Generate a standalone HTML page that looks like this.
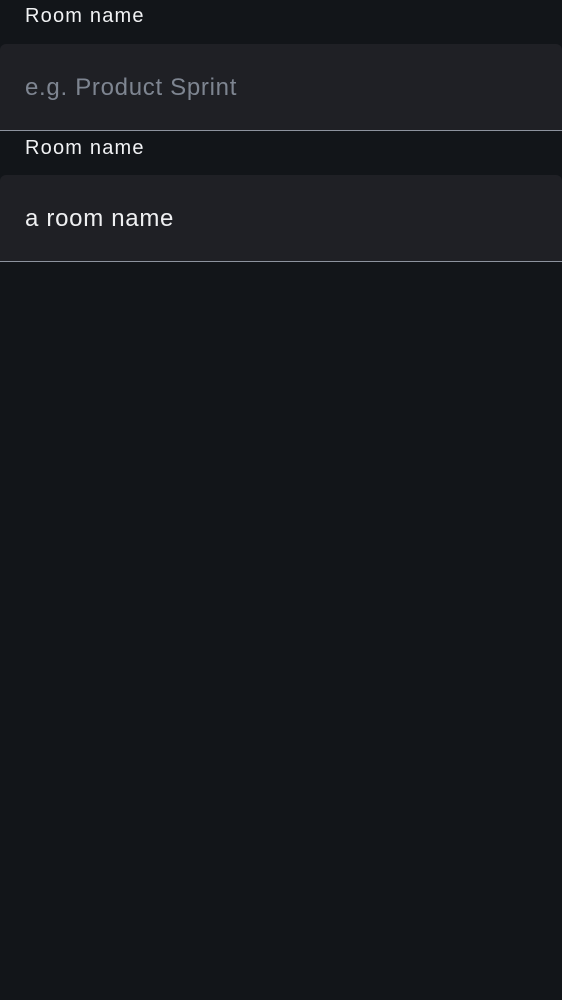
<!DOCTYPE html>
<html><head><style>
html,body{margin:0;padding:0;background:#121519;width:562px;height:1000px;overflow:hidden;font-family:"Liberation Sans",sans-serif;}
.lbl{position:absolute;left:25px;color:#f1f2f4;font-size:20px;line-height:24px;letter-spacing:1.2px;}
.box{position:absolute;left:0;width:562px;height:87px;background:#1f2025;border-radius:6px 6px 0 0;border-bottom:1.5px solid #8d939e;box-sizing:border-box;}
.box span{position:absolute;left:25px;top:30px;font-size:24px;line-height:28px;letter-spacing:0.7px;}
</style></head><body>
<div class="lbl" style="top:4px">Room name</div>
<div class="box" style="top:44px"><span style="color:#7e8591">e.g. Product Sprint</span></div>
<div class="lbl" style="top:136px">Room name</div>
<div class="box" style="top:175px"><span style="color:#eff0f2">a room name</span></div>
</body></html>
